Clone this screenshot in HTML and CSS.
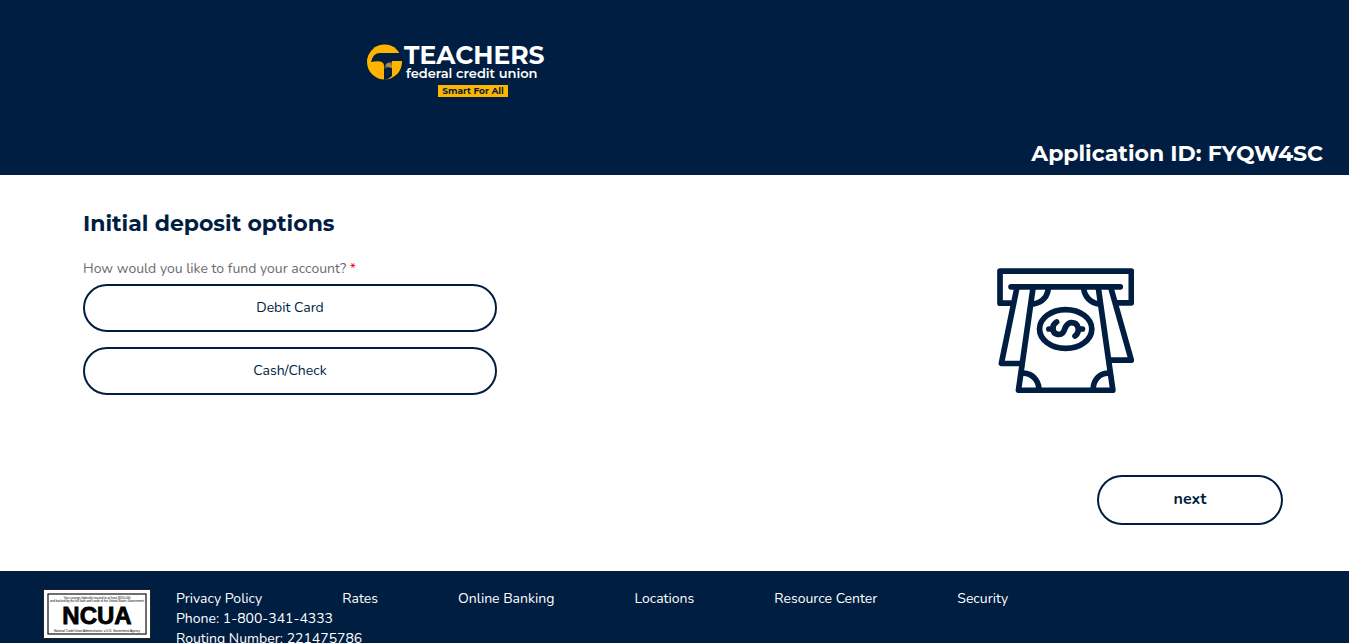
FILE: index.html
```html
<!DOCTYPE html>
<html lang="en">
<head>
<meta charset="utf-8">
<meta name="viewport" content="width=device-width, initial-scale=1">
<title>Initial deposit options</title>
<link rel="stylesheet" href="styles.css">
</head>
<body>
<header class="site-header">
  <svg class="brand" viewBox="0 0 177 54" role="img" aria-label="Teachers federal credit union, Smart For All">
    <defs>
      <linearGradient id="shade" x1="0" y1="1" x2="1" y2="0">
        <stop offset="0" stop-color="#001e41"/><stop offset=".6" stop-color="#c0984a"/><stop offset="1" stop-color="#59534a"/>
      </linearGradient>
    </defs>
    <circle cx="17.5" cy="18" r="17.500" fill="#ffb500"/>
    <path d="M4 18Q6 9 13 9H35V17H25V32Q22 35 17 36V22Q17 18 13 17.500Q9 17 4 18Z" fill="#001e41"/>
    <path d="M17 26Q17 18 25 18V24Q20 22 17 26Z" fill="url(#shade)"/>
    <text class="brand-name" x="37" y="20">TEACHERS</text>
    <text class="brand-sub" x="39" y="34">federal credit union</text>
    <rect x="71" y="41" width="70" height="12" fill="#ffb500"/>
    <text class="brand-tag" x="106" y="50" text-anchor="middle">Smart For All</text>
  </svg>
  <p class="application-id">Application ID: FYQW4SC</p>
</header>

<main class="content">
  <h1 class="title">Initial deposit options</h1>
  <div class="deposit">
    <section class="options" aria-labelledby="fund-label">
      <p class="question" id="fund-label">How would you like to fund your account? <span class="required">*</span></p>
      <button class="option" type="button">Debit Card</button>
      <button class="option" type="button">Cash/Check</button>
    </section>
    <div class="picture">
      <svg class="cash" viewBox="53 41 409 373" fill="none" stroke="#001e41" stroke-width="17" stroke-linecap="round" stroke-linejoin="round" aria-hidden="true">
        <path d="M101 146H62V50H454V145H411"/>
        <path d="M95 97H421"/>
        <path d="M113 97L66 326H122"/>
        <path d="M392 97L454 316H394"/>
        <path d="M161 97L117 406H399L355 97"/>
        <path d="M206 100C206 124 188 145 163 148M312 100C312 124 332 145 356 148"/>
        <path d="M132 355C158 356 176 375 178 400M384 355C358 356 342 375 340 400"/>
        <ellipse cx="258" cy="223" rx="78" ry="58"/>
        <path d="M231 202C215 212 216 236 234 239C262 243 248 207 274 204C298 203 302 232 286 244"/>
        <path d="M208 223H220M297 223H308"/>
      </svg>
    </div>
  </div>
  <div class="actions">
    <button class="next" type="button">next</button>
  </div>
</main>

<footer class="site-footer">
  <svg class="ncua" viewBox="0 0 108 50" role="img" aria-label="NCUA">
    <rect x=".5" y=".5" width="107" height="49" fill="#fff" stroke="#222"/>
    <rect x="5" y="5" width="98" height="40" fill="none" stroke="#222" stroke-width="1.3"/>
    <g class="ncua-small" text-anchor="middle">
      <text x="54" y="10">Your savings federally insured to at least $250,000</text>
      <text x="54" y="13">and backed by the full faith and credit of the United States Government</text>
      <text x="54" y="43">National Credit Union Administration, a U.S. Government Agency</text>
    </g>
    <text class="ncua-name" x="54" y="35" text-anchor="middle">NCUA</text>
  </svg>
  <div class="footer-info">
    <nav class="links" aria-label="Footer">
      <a href="#privacy">Privacy Policy</a>
      <a href="#rates">Rates</a>
      <a href="#banking">Online Banking</a>
      <a href="#locations">Locations</a>
      <a href="#resources">Resource Center</a>
      <a href="#security">Security</a>
    </nav>
    <p class="line">Phone: 1-800-341-4333</p>
    <p class="line">Routing Number: 221475786</p>
  </div>
</footer>
</body>
</html>
```
FILE: styles.css
```css
* { box-sizing: border-box; }

body {
  margin: 0;
  padding-right: 17px;
  height: 100vh;
  overflow: hidden;
  background: #fff;
  color: #001e41;
  font: 14px/20px Nunito, "Noto Sans", sans-serif;
}

p, h1 { margin: 0; }

.site-header {
  display: grid;
  grid-template-columns: 2fr 1fr;
  padding: 44px 26px 7px 21px;
  background: #001e41;
  color: #fff;
}

.brand {
  width: 177px;
  height: 54px;
  justify-self: center;
  overflow: visible;
}

.brand text, .title, .application-id { font-family: Montserrat, Inter, sans-serif; }
.brand-name { font-size: 25px; font-weight: 700; fill: #fff; }
.brand-sub { font-size: 13px; font-weight: 600; fill: #fff; }
.brand-tag { font-size: 9px; font-weight: 700; fill: #001e41; }

.application-id {
  grid-column: 1 / -1;
  margin-top: 42px;
  font-size: 22px;
  font-weight: 700;
  line-height: 28px;
  text-align: right;
}

.content { padding: 35px 66px 46px 83px; }

.title {
  font-size: 22px;
  font-weight: 700;
  line-height: 28px;
}

.deposit {
  display: flex;
  justify-content: space-between;
  margin-top: 21px;
}

.options {
  display: flex;
  flex-direction: column;
  width: 34.5%;
}

.question { margin-bottom: 5px; color: #6b6b6b; }
.required { color: #f00; }

.option, .next {
  border: 2px solid #001e41;
  border-radius: 25px;
  background: #fff;
  color: #001e41;
  font: inherit;
}

.option { height: 48px; }
.option + .option { margin-top: 15px; }

.picture { width: 36.2%; padding-top: 9px; }
.cash { display: block; width: 137px; height: 125px; margin: 0 auto; }

.actions { display: flex; justify-content: flex-end; margin-top: 80px; }
.next { width: 186px; height: 50px; padding-bottom: 3px; font-size: 16px; font-weight: 700; }

.site-footer {
  display: flex;
  gap: 25px;
  padding: 18px 43px 24px;
  background: #001e41;
  color: #fff;
}

.ncua { flex: none; width: 108px; height: 50px; }
.ncua text { font-family: "Liberation Sans", Arial, sans-serif; fill: #000; }
.ncua-name { font-size: 24px; font-weight: 700; stroke: #000; stroke-width: 0.8px; }
.ncua-small { font-size: 3px; }

.links { display: flex; gap: 80px; }
.links a { color: inherit; text-decoration: none; }
```
